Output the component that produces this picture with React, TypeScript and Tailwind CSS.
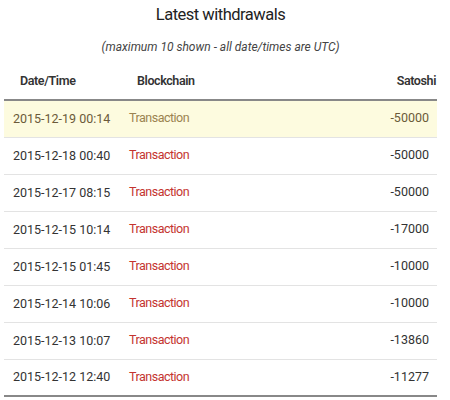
import React from 'react';

const rows = [
  { date: '2015-12-19 00:14', amount: '-50000', highlight: true },
  { date: '2015-12-18 00:40', amount: '-50000' },
  { date: '2015-12-17 08:15', amount: '-50000' },
  { date: '2015-12-15 10:14', amount: '-17000' },
  { date: '2015-12-15 01:45', amount: '-10000' },
  { date: '2015-12-14 10:06', amount: '-10000' },
  { date: '2015-12-13 10:07', amount: '-13860' },
  { date: '2015-12-12 12:40', amount: '-11277' },
];

export default function App() {
  return (
    <div className="w-[450px] h-[400px] bg-white text-[#333] font-['Roboto',sans-serif] overflow-hidden">
      <div className="w-[433px] ml-[4px]">
        <h2 className="text-center text-[16.5px] leading-[24px] pt-[3px] text-[#222] tracking-[-0.5px]">
          Latest withdrawals
        </h2>
        <p className="text-center text-[12px] leading-[16px] italic mt-[12px] text-[#444]">
          (maximum 10 shown - all date/times are UTC)
        </p>
        <table className="w-full mt-[17px] border-collapse text-[12.5px]">
          <thead>
            <tr className="border-b-2 border-[#888] tracking-[-0.4px]">
              <th className="w-[117px] text-left font-semibold pl-[16px] pb-[9px] leading-[18px]">Date/Time</th>
              <th className="text-left font-semibold pl-[16px] pb-[9px] leading-[18px]">Blockchain</th>
              <th className="text-right font-semibold pr-[1px] pb-[9px] leading-[18px]">Satoshi</th>
            </tr>
          </thead>
          <tbody className="border-b-2 border-[#888]">
            {rows.map((r, i) => (
              <tr
                key={i}
                className={`${i < rows.length - 1 ? 'border-b border-[#e3e3e3]' : ''} ${r.highlight ? 'bg-[#fdfbdf] text-[#6b5a3a]' : ''}`}
              >
                <td className="pl-[9px] h-[37px] leading-[18px]">{r.date}</td>
                <td className={`pl-[8px] tracking-[-0.5px] ${r.highlight ? 'text-[#9b8350]' : 'text-[#c4342f]'}`}>
                  Transaction
                </td>
                <td className="text-right pr-[8px]">{r.amount}</td>
              </tr>
            ))}
          </tbody>
        </table>
      </div>
    </div>
  );
}
